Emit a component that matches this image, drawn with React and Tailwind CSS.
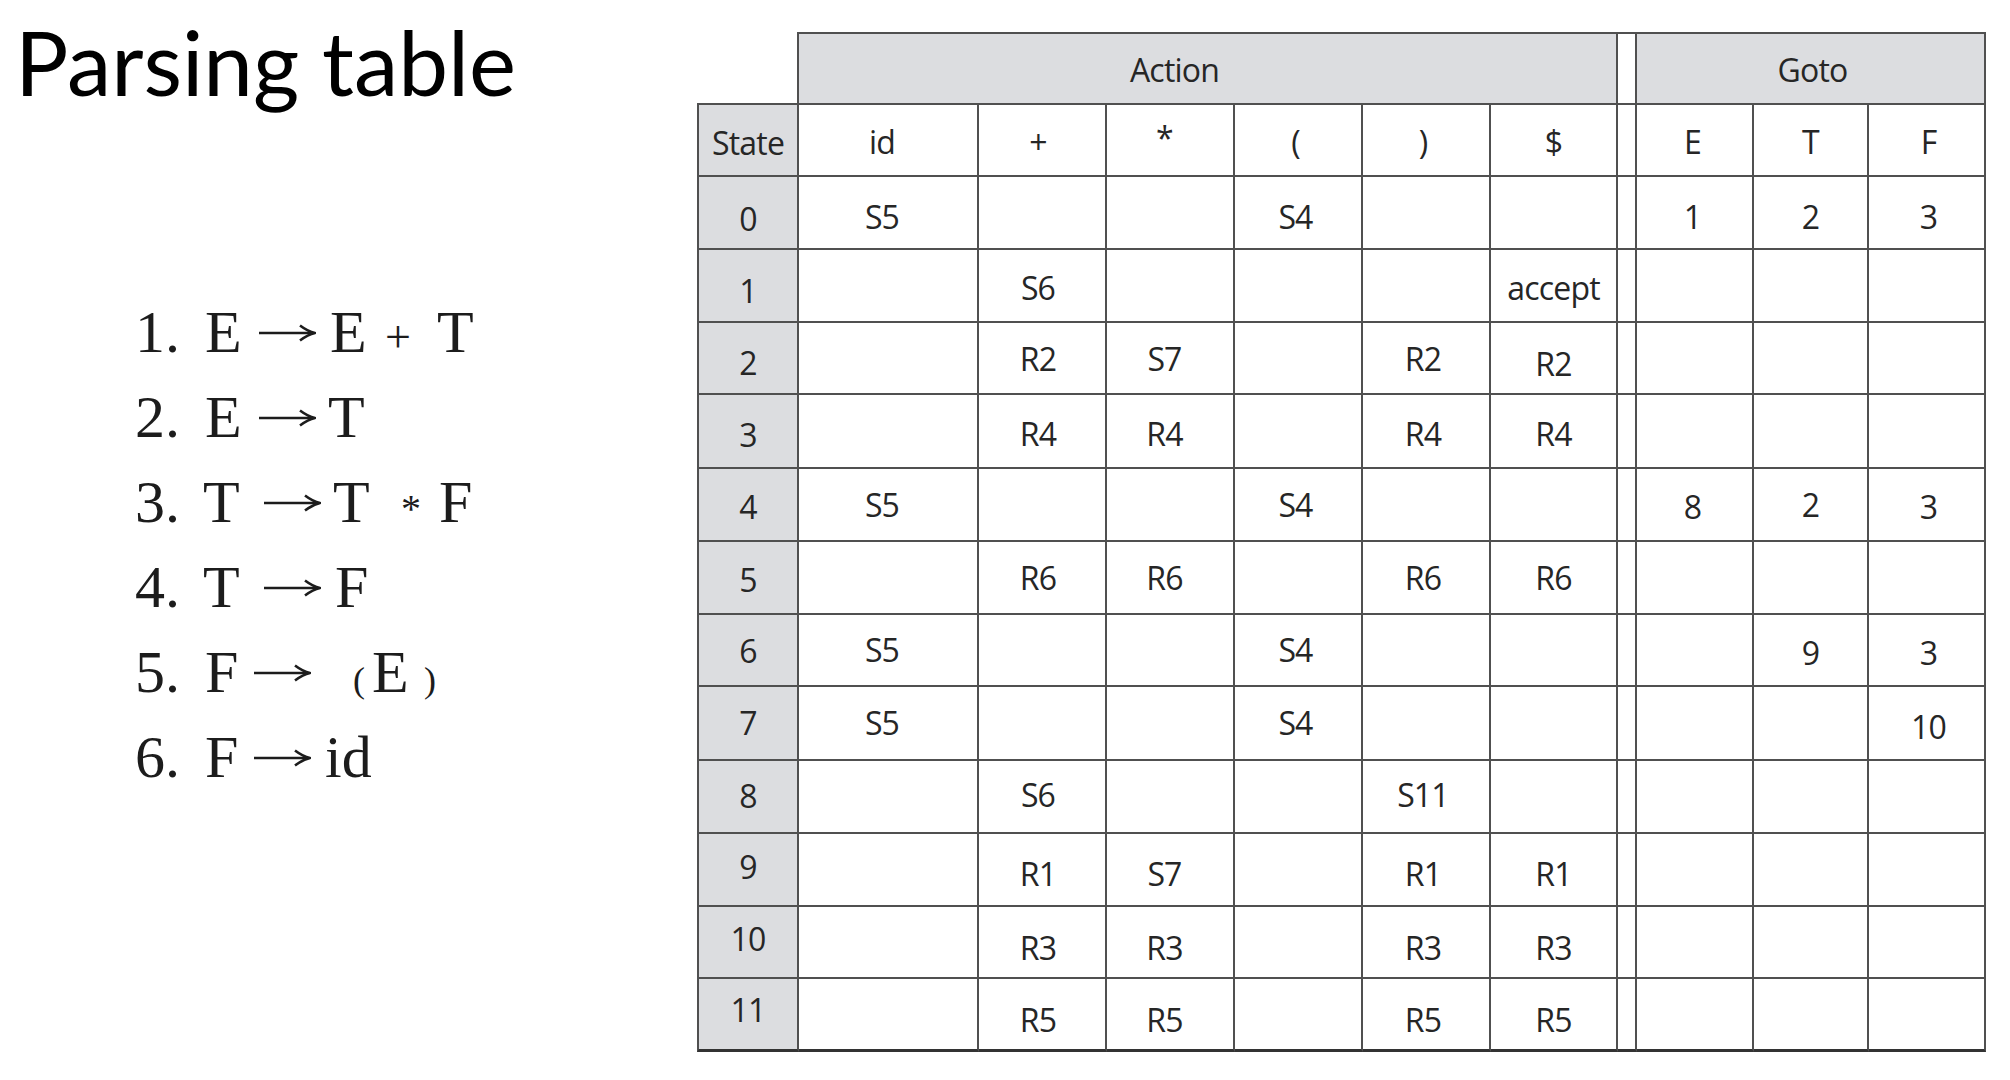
import React from 'react';

const LINE = 'border-[#505050]';
const COLS = 'grid-cols-[102px_180px_128px_128px_128px_128px_127px_19px_117px_115px_117px]';
const ROWS = 'grid-rows-[73px_72px_73px_73px_72px_74px_73px_73px_72px_74px_73px_73px_72px_73px]';

// horizontal nudge per column (id, +, *, (, ), $, gap, E, T, F)
const COLPAD = ['pr-[12px]', 'pr-[8px]', 'pr-[11px]', 'pr-[5px]', 'pr-[6px]', '', '', 'pr-[4px]', '', 'pl-[4px]'];

// state, pad for state cell, then cells: [text, padClass]
const rows = [
  ['0', 'pt-[12px]', [['S5', 'pt-[8px]'], '', '', ['S4', 'pt-[8px]'], '', '', '', ['1', 'pt-[8px]'], ['2', 'pt-[8px]'], ['3', 'pt-[8px]']]],
  ['1', 'pt-[10px]', ['', ['S6', 'pt-[4px]'], '', '', '', ['accept', 'pt-[4px]'], '', '', '', '']],
  ['2', 'pt-[10px]', ['', ['R2', 'pt-[2px]'], ['S7', 'pt-[2px]'], '', ['R2', 'pt-[2px]'], ['R2', 'pt-[12px]'], '', '', '', '']],
  ['3', 'pt-[8px]', ['', ['R4', 'pt-[6px]'], ['R4', 'pt-[6px]'], '', ['R4', 'pt-[6px]'], ['R4', 'pt-[6px]'], '', '', '', '']],
  ['4', 'pt-[4px]', [['S5', ''], '', '', ['S4', ''], '', '', '', ['8', 'pt-[4px]'], ['2', ''], ['3', 'pt-[4px]']]],
  ['5', 'pt-[4px]', ['', ['R6', ''], ['R6', ''], '', ['R6', ''], ['R6', ''], '', '', '', '']],
  ['6', 'pt-[2px]', [['S5', ''], '', '', ['S4', ''], '', '', '', '', ['9', 'pt-[6px]'], ['3', 'pt-[6px]']]],
  ['7', '', [['S5', ''], '', '', ['S4', ''], '', '', '', '', '', ['10', 'pt-[8px]']]],
  ['8', 'pb-[2px]', ['', ['S6', 'pb-[4px]'], '', '', ['S11', 'pb-[4px]'], '', '', '', '', '']],
  ['9', 'pb-[6px]', ['', ['R1', 'pt-[8px]'], ['S7', 'pt-[8px]'], '', ['R1', 'pt-[8px]'], ['R1', 'pt-[8px]'], '', '', '', '']],
  ['10', 'pb-[6px]', ['', ['R3', 'pt-[12px]'], ['R3', 'pt-[12px]'], '', ['R3', 'pt-[12px]'], ['R3', 'pt-[12px]'], '', '', '', '']],
  ['11', 'pb-[8px]', ['', ['R5', 'pt-[12px]'], ['R5', 'pt-[12px]'], '', ['R5', 'pt-[12px]'], ['R5', 'pt-[12px]'], '', '', '', '']],
];

const Cell = ({ children, className = '', last }) => (
  <div className={`flex items-center justify-center border-r-2 ${last ? 'border-b-[3px] border-b-[#333]' : 'border-b-2'} ${LINE} ${className}`}>
    {children}
  </div>
);

const ParsingTable = () => (
  <div className={`grid ${COLS} ${ROWS} w-[1289px] text-[32px] text-[#262626] leading-none tracking-[-0.8px] font-['Open_Sans',sans-serif]`}>
    {/* top header */}
    <div className={`border-r-2 border-b-2 ${LINE}`} />
    <div className={`col-span-6 flex items-center justify-center bg-[#dcdde0] border-t-2 border-r-2 border-b-2 ${LINE} pt-[2px] pr-[66px]`}>Action</div>
    <div className={`border-t-2 border-r-2 border-b-2 ${LINE}`} />
    <div className={`col-span-3 flex items-center justify-center bg-[#dcdde0] border-t-2 border-r-2 border-b-2 ${LINE} pt-[2px] pl-[4px]`}>Goto</div>

    {/* column headers */}
    <Cell className="border-l-2 bg-[#dcdde0] pt-[6px]">State</Cell>
    {['id', '+', '*', '(', ')', '$', '', 'E', 'T', 'F'].map((h, i) => (
      <Cell key={i} className={`${h === '*' ? 'pb-[4px]' : 'pt-[4px]'} ${COLPAD[i]}`}>{h}</Cell>
    ))}

    {rows.map(([st, sp, cells], r) => {
      const last = r === rows.length - 1;
      return (
        <React.Fragment key={st}>
          <Cell last={last} className={`border-l-2 bg-[#dcdde0] ${sp}`}>{st}</Cell>
          {cells.map((c, i) => (
            <Cell key={i} last={last} className={`${c ? c[1] : ''} ${COLPAD[i]}`}>{c ? c[0] : ''}</Cell>
          ))}
        </React.Fragment>
      );
    })}
  </div>
);

// long right arrow of the grammar; bottom of the svg sits on the baseline, shaft 19px above it
const Arrow = ({ w }) => (
  <span className={w}>
    <svg width="58" height="38" viewBox="0 0 58 38" className="inline-block align-baseline">
      <path d="M1 19 H54" stroke="#1c1c1c" strokeWidth="2.6" fill="none" />
      <path d="M42 11.5 Q50 17.5 57 19 Q50 20.5 42 26.5" stroke="#1c1c1c" strokeWidth="2.6" fill="none" strokeLinejoin="round" />
    </svg>
  </span>
);

const Grammar = () => (
  <div className="ml-[135px] mt-[174px] font-['Liberation_Serif',serif] text-[60px] text-[#1c1c1c]">
    <div className="flex items-baseline h-[85px] leading-[85px]">
      <span className="w-[70px]">1.</span>
      <span className="w-[53px]">E</span>
      <Arrow w="w-[72px]" />
      <span className="w-[55px]">E</span>
      <span className="w-[52px] text-[46px]">+</span>
      <span>T</span>
    </div>
    <div className="flex items-baseline h-[85px] leading-[85px]">
      <span className="w-[70px]">2.</span>
      <span className="w-[53px]">E</span>
      <Arrow w="w-[70px]" />
      <span>T</span>
    </div>
    <div className="flex items-baseline h-[85px] leading-[85px]">
      <span className="w-[68px]">3.</span>
      <span className="w-[60px]">T</span>
      <Arrow w="w-[70px]" />
      <span className="w-[68px]">T</span>
      <span className="w-[38px] text-[40px]">*</span>
      <span>F</span>
    </div>
    <div className="flex items-baseline h-[85px] leading-[85px]">
      <span className="w-[68px]">4.</span>
      <span className="w-[60px]">T</span>
      <Arrow w="w-[72px]" />
      <span>F</span>
    </div>
    <div className="flex items-baseline h-[85px] leading-[85px]">
      <span className="w-[70px]">5.</span>
      <span className="w-[48px]">F</span>
      <Arrow w="w-[100px]" />
      <span className="w-[19px] text-[36px]">(</span>
      <span className="w-[52px]">E</span>
      <span className="text-[36px]">)</span>
    </div>
    <div className="flex items-baseline h-[85px] leading-[85px]">
      <span className="w-[70px]">6.</span>
      <span className="w-[48px]">F</span>
      <Arrow w="w-[72px]" />
      <span>id</span>
    </div>
  </div>
);

const App = () => (
  <div className="w-[2010px] h-[1080px] bg-white flex items-start overflow-hidden">
    <div className="w-[697px] shrink-0 pt-[9px]">
      <h1 className="ml-[15px] font-['Lato',sans-serif] text-[89px] leading-[1.2] text-black">Parsing table</h1>
      <Grammar />
    </div>
    <div className="pt-[32px]">
      <ParsingTable />
    </div>
  </div>
);

export default App;
